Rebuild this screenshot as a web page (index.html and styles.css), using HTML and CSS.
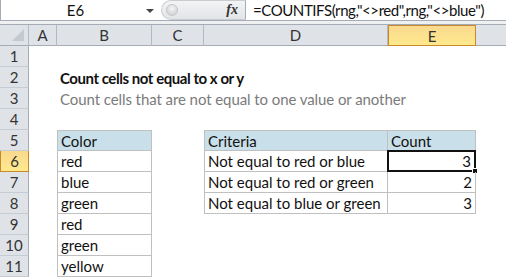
FILE: index.html
```html
<!DOCTYPE html>
<html lang="en">
<head>
<meta charset="UTF-8" />
<title>Count cells not equal to x or y</title>
<link rel="stylesheet" href="styles.css">
</head>
<body>

<!-- Formula bar -->
<div class="formula-bar">
  <div class="name-box">
    <span class="name">E6</span>
    <span class="caret"></span>
  </div>
  <div class="fx-box">
    <span class="knob"></span>
    <span class="fx">fx</span>
  </div>
  <div class="formula">=COUNTIFS(rng,"&lt;&gt;red",rng,"&lt;&gt;blue")</div>
</div>
<div class="bar-gap"></div>

<!-- Sheet grid -->
<div class="sheet">
  <div class="corner"><span class="tri"></span></div>
  <div class="col-head">A</div>
  <div class="col-head">B</div>
  <div class="col-head">C</div>
  <div class="col-head">D</div>
  <div class="col-head active">E</div>
  <div class="col-head last"></div>

  <div class="row-head">1</div>
  <div></div><div></div><div></div><div></div><div></div><div></div>

  <div class="row-head">2</div>
  <div></div><div class="title">Count cells not equal to x or y</div><div></div><div></div><div></div><div></div>

  <div class="row-head">3</div>
  <div></div><div class="subtitle">Count cells that are not equal to one value or another</div><div></div><div></div><div></div><div></div>

  <div class="row-head">4</div>
  <div></div><div></div><div></div><div></div><div></div><div></div>

  <div class="row-head">5</div>
  <div></div><div class="cell th left">Color</div><div></div><div class="cell th left">Criteria</div><div class="cell th">Count</div><div></div>

  <div class="row-head active">6</div>
  <div></div><div class="cell left">red</div><div></div><div class="cell left">Not equal to red or blue</div><div class="cell num selected">3<span class="handle"></span></div><div></div>

  <div class="row-head">7</div>
  <div></div><div class="cell left">blue</div><div></div><div class="cell left">Not equal to red or green</div><div class="cell num">2</div><div></div>

  <div class="row-head">8</div>
  <div></div><div class="cell left">green</div><div></div><div class="cell left">Not equal to blue or green</div><div class="cell num">3</div><div></div>

  <div class="row-head">9</div>
  <div></div><div class="cell left">red</div><div></div><div></div><div></div><div></div>

  <div class="row-head">10</div>
  <div></div><div class="cell left">green</div><div></div><div></div><div></div><div></div>

  <div class="row-head">11</div>
  <div></div><div class="cell left">yellow</div><div></div><div></div><div></div><div></div>
</div>

</body>
</html>
```

FILE: styles.css
```css
* {
  box-sizing: border-box;
}
body {
  margin: 0;
  background: #fff;
  font-family: Lato, 'Noto Sans', sans-serif;
  font-size: 15px;
  color: #111;
  overflow: hidden;
}

/* Formula bar */
.formula-bar {
  display: flex;
  height: 21px;
  border-bottom: 1px solid #a5acb5;
  border-left: 1px solid #a5acb5;
}
.name-box {
  width: 160px;
  display: flex;
  align-items: center;
  position: relative;
}
.name {
  flex: 1;
  text-align: center;
  padding-left: 4px;
}
.caret {
  width: 0;
  height: 0;
  border-left: 4px solid transparent;
  border-right: 4px solid transparent;
  border-top: 4px solid #444;
  margin-right: 7px;
  margin-top: 2px;
}
.fx-box {
  width: 85px;
  display: flex;
  align-items: center;
  justify-content: space-between;
  background: linear-gradient(#f3f4f5, #e2e4e7);
  border: 1px solid #c9cdd2;
  border-radius: 10px 0 0 10px;
  border-right-color: #a5acb5;
  height: 20px;
}
.knob {
  width: 12px;
  height: 12px;
  border-radius: 50%;
  margin-left: 4px;
  background: radial-gradient(circle at 50% 35%, #f5f5f5, #c8c9cc);
  border: 1px solid #c3c6ca;
}
.fx {
  font-family: 'Liberation Serif', serif;
  font-style: italic;
  font-weight: bold;
  font-size: 14px;
  margin-right: 7px;
  color: #333;
}
.formula {
  flex: 1;
  padding-left: 7px;
  line-height: 20px;
  white-space: nowrap;
  letter-spacing: -0.42px;
}
.bar-gap {
  height: 4px;
  background: #eef0f2;
  border-bottom: 1px solid #a5acb5;
}

/* Sheet */
.sheet {
  display: grid;
  grid-template-columns: 29px 28px 95px 52px 184px 88px 1fr;
  grid-template-rows: repeat(12, 21px);
}
.corner,
.col-head,
.row-head {
  background: #dfe3e8;
  color: #333;
  display: flex;
  align-items: center;
  justify-content: center;
  border-right: 1px solid #b3b9c1;
}
.col-head,
.corner {
  border-bottom: 1px solid #a5acb5;
}
.row-head {
  border-bottom: 1px solid #c6ccd3;
  border-right-color: #a5acb5;
}
.corner {
  position: relative;
}
.tri {
  position: absolute;
  right: 4px;
  bottom: 4px;
  width: 0;
  height: 0;
  border-left: 12px solid transparent;
  border-bottom: 12px solid #c4c9cf;
}
.col-head.last {
  border-right: none;
}
.col-head.active,
.row-head.active {
  background: linear-gradient(#f9d98f, #ffe98c);
  border: 1px solid #c8882c;
}
.row-head.active {
  border-top: none;
}

.title {
  font-weight: bold;
  white-space: nowrap;
  padding-left: 3px;
  letter-spacing: -0.45px;
  display: flex;
  align-items: center;
}
.subtitle {
  color: #7b7b7b;
  white-space: nowrap;
  padding-left: 3px;
  letter-spacing: -0.08px;
  display: flex;
  align-items: center;
}

/* Table cells */
.cell {
  border-right: 1px solid #c0c0c0;
  border-bottom: 1px solid #c0c0c0;
  padding: 0 3px;
  display: flex;
  align-items: center;
  white-space: nowrap;
  position: relative;
}
.cell.left {
  border-left: 1px solid #c0c0c0;
}
.cell.th {
  background: #c9e0ea;
  border-top: 1px solid #c0c0c0;
}
.cell.num {
  justify-content: flex-end;
}
.cell.selected {
  border: 2px solid #111;
  margin-top: -1px;
  margin-left: -1px;
}
.handle {
  position: absolute;
  right: -4px;
  bottom: -4px;
  width: 6px;
  height: 6px;
  background: #111;
  border: 1px solid #fff;
}
```
